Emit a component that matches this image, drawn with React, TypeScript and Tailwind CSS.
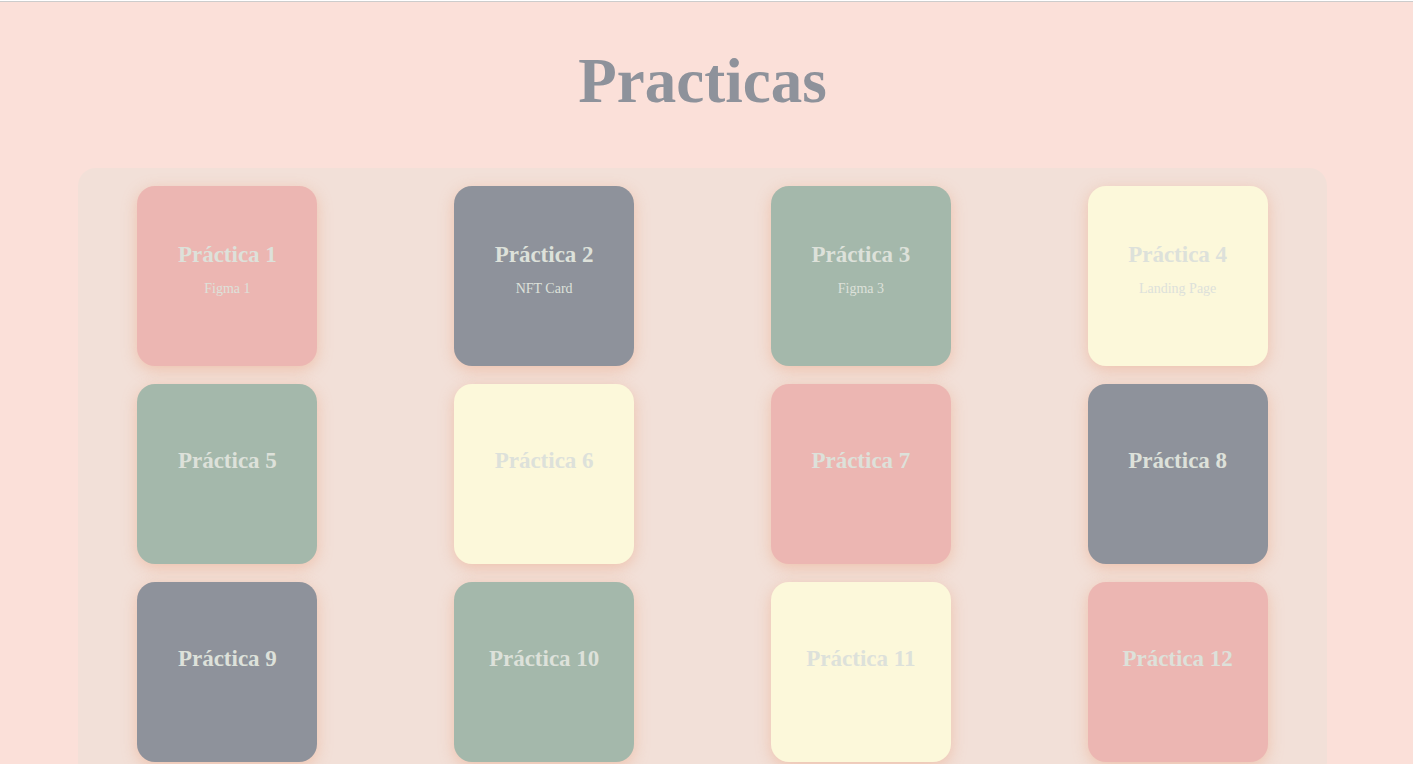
type Tone = 'pink' | 'gray' | 'green' | 'yellow';

interface Practice {
  title: string;
  detail?: string;
  tone: Tone;
}

const tones: Record<Tone, string> = {
  pink: 'bg-[#ecb6b2]',
  gray: 'bg-[#8e929b]',
  green: 'bg-[#a4b8ab]',
  yellow: 'bg-[#fcf8da]',
};

const practices: Practice[] = [
  { title: 'Práctica 1', detail: 'Figma 1', tone: 'pink' },
  { title: 'Práctica 2', detail: 'NFT Card', tone: 'gray' },
  { title: 'Práctica 3', detail: 'Figma 3', tone: 'green' },
  { title: 'Práctica 4', detail: 'Landing Page', tone: 'yellow' },
  { title: 'Práctica 5', tone: 'green' },
  { title: 'Práctica 6', tone: 'yellow' },
  { title: 'Práctica 7', tone: 'pink' },
  { title: 'Práctica 8', tone: 'gray' },
  { title: 'Práctica 9', tone: 'gray' },
  { title: 'Práctica 10', tone: 'green' },
  { title: 'Práctica 11', tone: 'yellow' },
  { title: 'Práctica 12', tone: 'pink' },
];

function PracticeCard({ title, detail, tone }: Practice) {
  return (
    <a
      href="#"
      className={`flex size-[180px] flex-col items-center justify-center rounded-[18px] text-center text-[#dde1da] shadow-[0_4px_15px_rgba(233,150,110,0.4)] ${tones[tone]}`}
    >
      <h2 className="text-[23px] leading-[26px] font-bold">{title}</h2>
      <p className="my-[13px] text-[14px] leading-4">{detail}</p>
    </a>
  );
}

export default function App() {
  return (
    <div className="min-h-screen border-t border-white bg-[#fbe0d9] font-['Liberation_Serif',serif]">
      <main className="border-t border-[#cccccc] pr-[86px] pl-[78px]">
        <h1 className="pt-[43px] pb-[51px] text-center text-[63px] leading-[72px] font-bold text-[#8e929b]">
          Practicas
        </h1>
        <section className="grid grid-cols-4 justify-items-center gap-[18px] rounded-[18px] bg-[#f2e0d8] py-[18px]">
          {practices.map((practice) => (
            <PracticeCard key={practice.title} {...practice} />
          ))}
        </section>
      </main>
    </div>
  );
}
